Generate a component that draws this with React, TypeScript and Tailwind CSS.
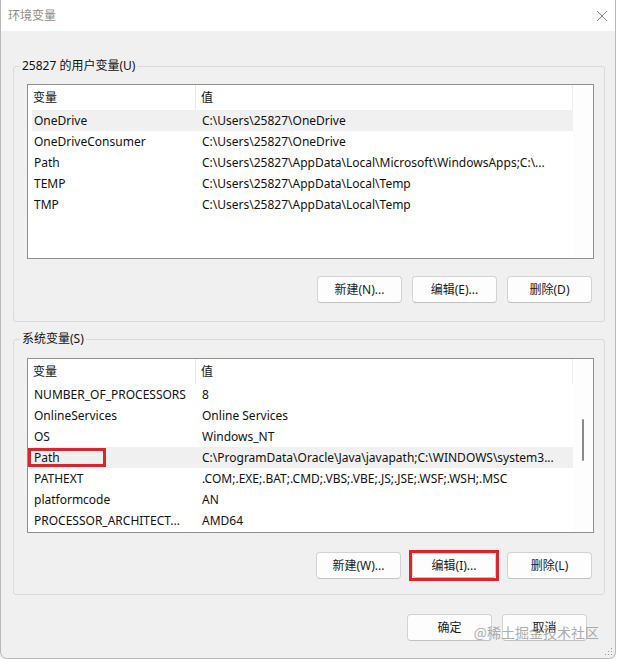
import React from "react";

type Row = { name: string; value: string; selected?: boolean; marked?: boolean };

const userRows: Row[] = [
  { name: "OneDrive", value: "C:\\Users\\25827\\OneDrive", selected: true },
  { name: "OneDriveConsumer", value: "C:\\Users\\25827\\OneDrive" },
  { name: "Path", value: "C:\\Users\\25827\\AppData\\Local\\Microsoft\\WindowsApps;C:\\..." },
  { name: "TEMP", value: "C:\\Users\\25827\\AppData\\Local\\Temp" },
  { name: "TMP", value: "C:\\Users\\25827\\AppData\\Local\\Temp" },
];

const systemRows: Row[] = [
  { name: "NUMBER_OF_PROCESSORS", value: "8" },
  { name: "OnlineServices", value: "Online Services" },
  { name: "OS", value: "Windows_NT" },
  {
    name: "Path",
    value: "C:\\ProgramData\\Oracle\\Java\\javapath;C:\\WINDOWS\\system3...",
    selected: true,
    marked: true,
  },
  { name: "PATHEXT", value: ".COM;.EXE;.BAT;.CMD;.VBS;.VBE;.JS;.JSE;.WSF;.WSH;.MSC" },
  { name: "platformcode", value: "AN" },
  { name: "PROCESSOR_ARCHITECT...", value: "AMD64" },
];

const WinButton = ({ label, marked }: { label: string; marked?: boolean }) => {
  const btn = (
    <button
      className={
        "bg-[#fdfdfd] border border-[#d3d3d3] border-b-[#c2c2c2] rounded-[4px] text-[12px] text-[#1b1b1b] leading-none " +
        (marked ? "w-[84px] h-[25px]" : "w-[85px] h-[27px]")
      }
    >
      {label}
    </button>
  );
  if (!marked) return btn;
  // red highlight frame drawn around the button
  return <span className="-m-[2px] flex border-[3px] border-[#d9252e]">{btn}</span>;
};

const VarList = ({ rows, scroll }: { rows: Row[]; scroll?: boolean }) => (
  <div className="h-[175px] border border-[#8f8f8f] bg-white flex">
    <div className="w-[545px] flex flex-col">
      <div className="h-[25px] flex items-center border-r border-[#ececec]">
        <div className="w-[168px] h-full pl-[5px] flex items-center border-r border-[#e8e8e8]">变量</div>
        <div className="pl-[5px]">值</div>
      </div>
      {rows.map((r) => (
        <div key={r.name + r.value} className="relative h-[21px]">
          <div
            className={
              "ml-[4px] h-[21px] flex items-center whitespace-nowrap overflow-hidden " +
              (r.selected ? "bg-[#f0f0f0]" : "")
            }
          >
            <div className="w-[164px] pl-[2px] shrink-0 overflow-hidden">{r.name}</div>
            <div className="pl-[6px]">{r.value}</div>
          </div>
          {r.marked && (
            <div className="absolute left-0 top-[1px] w-[78px] h-[19px] border-[3px] border-[#d9252e]" />
          )}
        </div>
      ))}
    </div>
    <div className="w-[19px] bg-[#fdfdfd]">
      {scroll && <div className="mt-[60px] ml-[9px] w-[2px] h-[42px] rounded-full bg-[#8a8a8a]" />}
    </div>
  </div>
);

const Group = ({
  title,
  children,
  className,
}: {
  title: string;
  children: React.ReactNode;
  className?: string;
}) => (
  <div className={"relative ml-[12px] mr-[10px] border border-[#dadada] rounded-[3px] pl-[13px] pr-[10px] " + (className ?? "")}>
    <span className="absolute -top-[9px] left-[6px] px-[2px] bg-[#f0f0f0] leading-[16px]">{title}</span>
    {children}
  </div>
);

export default function App() {
  return (
    <div className="w-[618px] h-[659px] bg-white">
      <div className="relative w-[616px] h-[659px] bg-[#f0f0f0] border-l border-r border-b border-[#b9b9b9] rounded-b-[7px] overflow-hidden font-['Noto_Sans','Noto_Sans_CJK_SC',sans-serif] text-[12px] text-[#111]">
        <div className="h-[31px] bg-white flex items-center justify-between pl-[7px] pr-[7px]">
          <span className="text-[#8d8d8d] text-[12px]">环境变量</span>
          <svg width="12" height="12" viewBox="0 0 12 12">
            <path d="M1 1 L11 11 M11 1 L1 11" stroke="#8a8a8a" strokeWidth="1" fill="none" />
          </svg>
        </div>

        <Group title="25827 的用户变量(U)" className="mt-[35px] pt-[17px] pb-[18px]">
          <VarList rows={userRows} />
          <div className="mt-[17px] flex justify-end gap-[10px] pr-[2px]">
            <WinButton label="新建(N)..." />
            <WinButton label="编辑(E)..." />
            <WinButton label="删除(D)" />
          </div>
        </Group>

        <Group title="系统变量(S)" className="mt-[17px] pt-[18px] pb-[15px]">
          <VarList rows={systemRows} scroll />
          <div className="mt-[19px] flex justify-end gap-[10px] pr-[2px]">
            <WinButton label="新建(W)..." />
            <WinButton label="编辑(I)..." marked />
            <WinButton label="删除(L)" />
          </div>
        </Group>

        <div className="mt-[19px] flex justify-end gap-[10px] pr-[28px]">
          <WinButton label="确定" />
          <WinButton label="取消" />
        </div>

        <span className="absolute right-[16px] bottom-[15px] text-[14px] text-[#9a9a9a] opacity-80 font-['Noto_Sans_CJK_SC',sans-serif]">
          @稀土掘金技术社区
        </span>
        <svg width="8" height="8" viewBox="0 0 8 8" className="absolute right-[2px] bottom-[2px]">
          <rect x="6" y="0" width="1" height="1" fill="#9a9a9a" />
          <rect x="3" y="3" width="1" height="1" fill="#9a9a9a" />
          <rect x="6" y="3" width="1" height="1" fill="#9a9a9a" />
          <rect x="0" y="6" width="1" height="1" fill="#9a9a9a" />
          <rect x="3" y="6" width="1" height="1" fill="#9a9a9a" />
          <rect x="6" y="6" width="1" height="1" fill="#9a9a9a" />
        </svg>
      </div>
    </div>
  );
}
